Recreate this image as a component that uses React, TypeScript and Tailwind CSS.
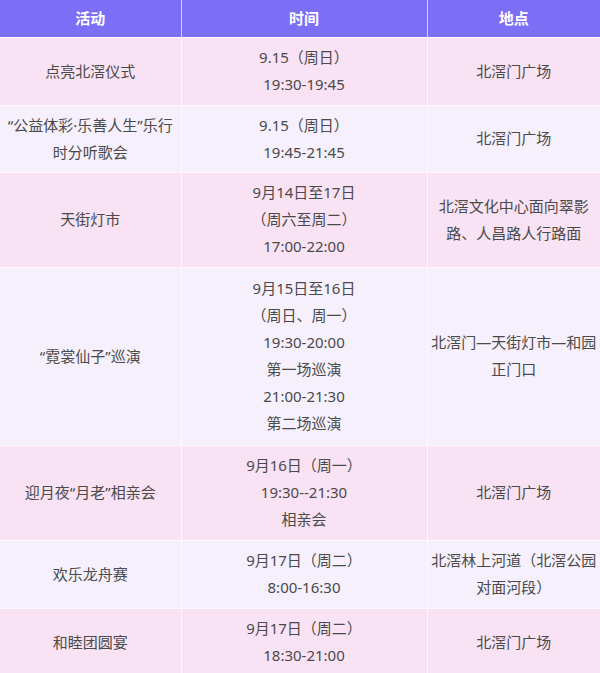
const rows: { h: string; bg: string; a: string[]; t: string[]; p: string[] }[] = [
  { h: "h-[68px]", bg: "bg-[#f9e2f3]", a: ["点亮北滘仪式"], t: ["9.15（周日）", "19:30-19:45"], p: ["北滘门广场"] },
  {
    h: "h-[67px]",
    bg: "bg-[#f5f0fc]",
    a: ["“公益体彩·乐善人生”乐行", "时分听歌会"],
    t: ["9.15（周日）", "19:45-21:45"],
    p: ["北滘门广场"],
  },
  {
    h: "h-[95px]",
    bg: "bg-[#f9e2f3]",
    a: ["天街灯市"],
    t: ["9月14日至17日", "（周六至周二）", "17:00-22:00"],
    p: ["北滘文化中心面向翠影", "路、人昌路人行路面"],
  },
  {
    h: "h-[178px]",
    bg: "bg-[#f5f0fc]",
    a: ["“霓裳仙子”巡演"],
    t: ["9月15日至16日", "（周日、周一）", "19:30-20:00", "第一场巡演", "21:00-21:30", "第二场巡演"],
    p: ["北滘门—天街灯市—和园", "正门口"],
  },
  {
    h: "h-[95px]",
    bg: "bg-[#f9e2f3]",
    a: ["迎月夜“月老”相亲会"],
    t: ["9月16日（周一）", "19:30--21:30", "相亲会"],
    p: ["北滘门广场"],
  },
  {
    h: "h-[68px]",
    bg: "bg-[#f5f0fc]",
    a: ["欢乐龙舟赛"],
    t: ["9月17日（周二）", "8:00-16:30"],
    p: ["北滘林上河道（北滘公园", "对面河段）"],
  },
  {
    h: "h-[68px]",
    bg: "bg-[#f9e2f3]",
    a: ["和睦团圆宴"],
    t: ["9月17日（周二）", "18:30-21:00"],
    p: ["北滘门广场"],
  },
];

function Lines({ lines }: { lines: string[] }) {
  return (
    <>
      {lines.map((l, i) => (
        <div key={i} className="whitespace-nowrap">
          {l}
        </div>
      ))}
    </>
  );
}

export default function App() {
  return (
    <div
      className="w-[600px] h-[673px] overflow-hidden bg-white"
      style={{ fontFamily: '"Noto Sans", "Noto Sans CJK SC", sans-serif' }}
    >
      <table className="w-[600px] table-fixed border-collapse text-[15px] leading-[27px] text-[#4a4a4a]">
        <colgroup>
          <col className="w-[181px]" />
          <col className="w-[246px]" />
          <col className="w-[173px]" />
        </colgroup>
        <thead>
          <tr className="h-[37px] bg-[#7c6ef5] text-white font-bold">
            <th className="border-r border-[#d8d2fb] text-center align-middle">活动</th>
            <th className="border-r border-[#d8d2fb] text-center align-middle">时间</th>
            <th className="text-center align-middle">地点</th>
          </tr>
        </thead>
        <tbody>
          {rows.map((r, i) => (
            <tr key={i} className={`${r.h} ${r.bg} border-t border-[#fdf9fd]`}>
              <td className="border-r border-[#fdf9fd] text-center align-middle p-0">
                <Lines lines={r.a} />
              </td>
              <td className="border-r border-[#fdf9fd] text-center align-middle p-0">
                <Lines lines={r.t} />
              </td>
              <td className="text-center align-middle p-0">
                <Lines lines={r.p} />
              </td>
            </tr>
          ))}
        </tbody>
      </table>
    </div>
  );
}
